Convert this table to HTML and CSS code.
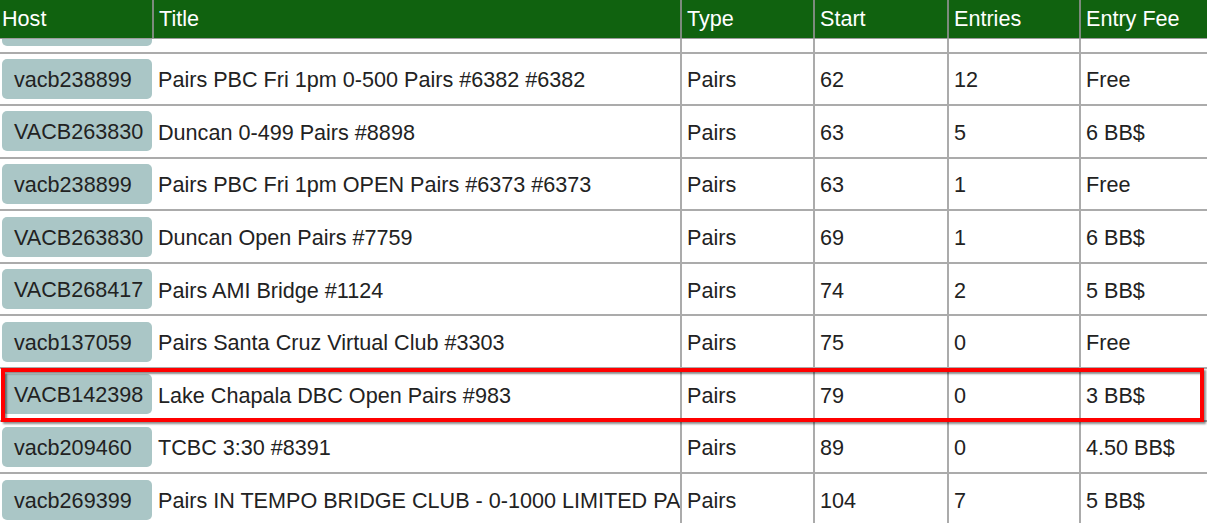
FILE: index.html
```html
<!DOCTYPE html>
<html>
<head>
<meta charset="utf-8">
<link rel="stylesheet" href="styles.css">
</head>
<body>
<div class="table">
  <div class="head">
    <div class="th th-host">Host</div>
    <div class="th">Title</div>
    <div class="th">Type</div>
    <div class="th">Start</div>
    <div class="th">Entries</div>
    <div class="th">Entry Fee</div>
  </div>
  <div class="body">
    <div class="rows">
      <div class="tr">
        <div class="td td-host"><span class="badge"></span></div>
        <div class="td td-title"></div>
        <div class="td"></div>
        <div class="td"></div>
        <div class="td"></div>
        <div class="td"></div>
      </div>
      <div class="tr">
        <div class="td td-host"><span class="badge">vacb238899</span></div>
        <div class="td td-title">Pairs PBC Fri 1pm 0-500 Pairs #6382 #6382</div>
        <div class="td">Pairs</div>
        <div class="td">62</div>
        <div class="td">12</div>
        <div class="td">Free</div>
      </div>
      <div class="tr">
        <div class="td td-host"><span class="badge">VACB263830</span></div>
        <div class="td td-title">Duncan 0-499 Pairs #8898</div>
        <div class="td">Pairs</div>
        <div class="td">63</div>
        <div class="td">5</div>
        <div class="td">6 BB$</div>
      </div>
      <div class="tr">
        <div class="td td-host"><span class="badge">vacb238899</span></div>
        <div class="td td-title">Pairs PBC Fri 1pm OPEN Pairs #6373 #6373</div>
        <div class="td">Pairs</div>
        <div class="td">63</div>
        <div class="td">1</div>
        <div class="td">Free</div>
      </div>
      <div class="tr">
        <div class="td td-host"><span class="badge">VACB263830</span></div>
        <div class="td td-title">Duncan Open Pairs #7759</div>
        <div class="td">Pairs</div>
        <div class="td">69</div>
        <div class="td">1</div>
        <div class="td">6 BB$</div>
      </div>
      <div class="tr">
        <div class="td td-host"><span class="badge">VACB268417</span></div>
        <div class="td td-title">Pairs AMI Bridge #1124</div>
        <div class="td">Pairs</div>
        <div class="td">74</div>
        <div class="td">2</div>
        <div class="td">5 BB$</div>
      </div>
      <div class="tr">
        <div class="td td-host"><span class="badge">vacb137059</span></div>
        <div class="td td-title">Pairs Santa Cruz Virtual Club #3303</div>
        <div class="td">Pairs</div>
        <div class="td">75</div>
        <div class="td">0</div>
        <div class="td">Free</div>
      </div>
      <div class="tr tr-highlight">
        <div class="td td-host"><span class="badge">VACB142398</span></div>
        <div class="td td-title">Lake Chapala DBC Open Pairs #983</div>
        <div class="td">Pairs</div>
        <div class="td">79</div>
        <div class="td">0</div>
        <div class="td">3 BB$</div>
        <div class="frame"></div>
      </div>
      <div class="tr">
        <div class="td td-host"><span class="badge">vacb209460</span></div>
        <div class="td td-title">TCBC 3:30 #8391</div>
        <div class="td">Pairs</div>
        <div class="td">89</div>
        <div class="td">0</div>
        <div class="td">4.50 BB$</div>
      </div>
      <div class="tr">
        <div class="td td-host"><span class="badge">vacb269399</span></div>
        <div class="td td-title">Pairs IN TEMPO BRIDGE CLUB - 0-1000 LIMITED PA</div>
        <div class="td">Pairs</div>
        <div class="td">104</div>
        <div class="td">7</div>
        <div class="td">5 BB$</div>
      </div>
    </div>
  </div>
</div>
</body>
</html>
```

FILE: styles.css
```css
html, body {
  margin: 0;
  padding: 0;
  background: #ffffff;
  overflow: hidden;
}

body {
  font-family: "Liberation Sans", Arial, sans-serif;
  font-size: 21.6px;
  color: #222222;
}

.table {
  width: 1207px;
  height: 523px;
  display: flex;
  flex-direction: column;
  overflow: hidden;
}

.head,
.tr {
  display: grid;
  grid-template-columns: 152px 528px 133px 134px 132px 1fr;
}

.head {
  height: 39px;
  box-sizing: border-box;
  background: #10620f;
  border-bottom: 1px solid #9c9c9c;
  flex: none;
}

.th {
  color: #ffffff;
  display: flex;
  align-items: center;
  padding-left: 5px;
  border-left: 2px solid #7d8a7d;
  white-space: nowrap;
  overflow: hidden;
}

.th-host {
  border-left: 0;
  padding-left: 2px;
}

.body {
  flex: 1;
  overflow: hidden;
}

.rows {
  margin-top: -38.1px;
}

.tr {
  height: 52.6px;
  box-sizing: border-box;
  border-bottom: 2px solid #ababab;
}

.td {
  display: flex;
  align-items: center;
  padding-left: 5px;
  padding-top: 3px;
  border-left: 2px solid #ababab;
  white-space: nowrap;
  overflow: hidden;
}

.td-host {
  border-left: 0;
  padding-left: 2px;
  padding-top: 0;
}

.td-title {
  border-left: 0;
  padding-left: 6px;
}

.badge {
  display: flex;
  align-items: center;
  box-sizing: border-box;
  width: 150px;
  height: 40px;
  padding-left: 12px;
  padding-top: 2px;
  background: #aac6c6;
  border-radius: 5px;
  color: #222222;
}

.tr-highlight {
  position: relative;
}

.frame {
  position: absolute;
  left: 1px;
  right: 3px;
  top: -0.6px;
  bottom: -2.3px;
  border: 4px solid #ff0000;
  box-shadow: 2px 2px 2px rgba(0, 0, 0, 0.45), inset 2px 2px 2px rgba(0, 0, 0, 0.45);
  pointer-events: none;
  z-index: 2;
}
```
